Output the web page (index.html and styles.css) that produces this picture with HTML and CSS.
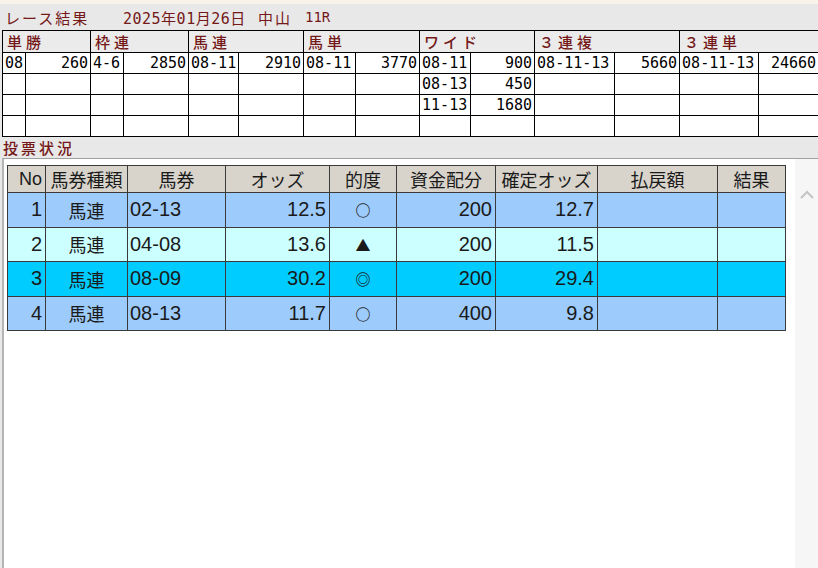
FILE: index.html
```html
<!DOCTYPE html>
<html lang="ja">
<head>
    <meta charset="UTF-8">
    <title>レース結果</title>
    <link rel="stylesheet" href="styles.css">
</head>
<body>
    <div class="top-strip"></div>

    <div class="race-title">
        <span class="race-label">レース結果</span>
        <span class="race-date">2025年01月26日</span>
        <span class="race-place">中山</span>
        <span class="race-no">11R</span>
    </div>

    <table class="payouts">
        <colgroup>
            <col style="width:23px"><col style="width:65px">
            <col style="width:33px"><col style="width:65px">
            <col style="width:50px"><col style="width:65px">
            <col style="width:52px"><col style="width:64px">
            <col style="width:51px"><col style="width:64px">
            <col style="width:80px"><col style="width:65px">
            <col style="width:79px"><col style="width:60px">
        </colgroup>
        <tr class="payout-head">
            <th colspan="2">単勝</th>
            <th colspan="2">枠連</th>
            <th colspan="2">馬連</th>
            <th colspan="2">馬単</th>
            <th colspan="2">ワイド</th>
            <th colspan="2">３連複</th>
            <th colspan="2">３連単</th>
        </tr>
        <tr>
            <td>08</td><td class="num">260</td>
            <td>4-6</td><td class="num">2850</td>
            <td>08-11</td><td class="num">2910</td>
            <td>08-11</td><td class="num">3770</td>
            <td>08-11</td><td class="num">900</td>
            <td>08-11-13</td><td class="num">5660</td>
            <td>08-11-13</td><td class="num">24660</td>
        </tr>
        <tr>
            <td></td><td></td><td></td><td></td><td></td><td></td><td></td><td></td>
            <td>08-13</td><td class="num">450</td>
            <td></td><td></td><td></td><td></td>
        </tr>
        <tr>
            <td></td><td></td><td></td><td></td><td></td><td></td><td></td><td></td>
            <td>11-13</td><td class="num">1680</td>
            <td></td><td></td><td></td><td></td>
        </tr>
        <tr>
            <td></td><td></td><td></td><td></td><td></td><td></td><td></td>
            <td></td><td></td><td></td><td></td><td></td><td></td><td></td>
        </tr>
    </table>

    <div class="section-label">投票状況</div>

    <div class="vote-panel">
        <div class="vote-list">
            <table class="votes">
                <colgroup>
                    <col style="width:38px"><col style="width:82px">
                    <col style="width:98px"><col style="width:104px">
                    <col style="width:67px"><col style="width:99px">
                    <col style="width:102px"><col style="width:120px">
                    <col style="width:68px">
                </colgroup>
                <tr class="vote-head">
                    <th class="no">No</th>
                    <th>馬券種類</th>
                    <th>馬券</th>
                    <th>オッズ</th>
                    <th>的度</th>
                    <th>資金配分</th>
                    <th>確定オッズ</th>
                    <th>払戻額</th>
                    <th>結果</th>
                </tr>
                <tr class="row-blue">
                    <td class="r">1</td><td class="c">馬連</td><td class="l">02-13</td>
                    <td class="r">12.5</td><td class="mark">○</td><td class="r">200</td>
                    <td class="r">12.7</td><td></td><td></td>
                </tr>
                <tr class="row-pale">
                    <td class="r">2</td><td class="c">馬連</td><td class="l">04-08</td>
                    <td class="r">13.6</td><td class="mark">▲</td><td class="r">200</td>
                    <td class="r">11.5</td><td></td><td></td>
                </tr>
                <tr class="row-cyan">
                    <td class="r">3</td><td class="c">馬連</td><td class="l">08-09</td>
                    <td class="r">30.2</td><td class="mark">◎</td><td class="r">200</td>
                    <td class="r">29.4</td><td></td><td></td>
                </tr>
                <tr class="row-blue">
                    <td class="r">4</td><td class="c">馬連</td><td class="l">08-13</td>
                    <td class="r">11.7</td><td class="mark">○</td><td class="r">400</td>
                    <td class="r">9.8</td><td></td><td></td>
                </tr>
            </table>
        </div>
        <div class="scrollbar">
            <svg class="scroll-up" width="16" height="10" viewBox="0 0 16 10">
                <polyline points="2,8 8,2 14,8" fill="none" stroke="#c4c4c4" stroke-width="2"/>
            </svg>
        </div>
    </div>
</body>
</html>
```

FILE: styles.css
```css
body {
    margin: 0;
    width: 818px;
    height: 568px;
    overflow: hidden;
    background: #e8e8e8;
    font-family: "Liberation Sans", "Noto Sans CJK JP", sans-serif;
    color: #000;
}

.top-strip {
    height: 4px;
    background: #f7f3ea;
}

/* race header line */
.race-title {
    height: 26px;
    display: flex;
    align-items: center;
    padding-left: 5px;
    color: #741818;
    font-family: "DejaVu Sans Mono", "Noto Sans CJK JP", monospace;
    font-size: 14px;
    white-space: nowrap;
}

.race-title span {
    flex: none;
}

.race-label {
    font-size: 15px;
    letter-spacing: 2px;
    width: 118px;
}

.race-date {
    font-size: 15px;
    letter-spacing: 0.5px;
    width: 135px;
}

.race-place {
    font-size: 15px;
    letter-spacing: 2px;
    width: 47px;
}

/* payout table */
.payouts {
    margin-left: 2px;
    border-collapse: collapse;
    table-layout: fixed;
    width: 816px;
}

.payouts th,
.payouts td {
    border: 1px solid #000;
    height: 20px;
    padding: 0 2px;
    white-space: nowrap;
    overflow: hidden;
}

.payouts th {
    text-align: left;
    padding-left: 4px;
    color: #741818;
    font-family: "Noto Sans CJK JP", sans-serif;
    font-size: 15px;
    font-weight: 500;
    letter-spacing: 4px;
    background: #ebebeb;
}

.payouts td {
    background: #fff;
    font-family: "DejaVu Sans Mono", monospace;
    font-size: 15px;
    line-height: 20px;
}

.payouts td.num {
    text-align: right;
}

.section-label {
    height: 21px;
    padding-left: 3px;
    display: flex;
    align-items: center;
    color: #741818;
    font-family: "Noto Sans CJK JP", sans-serif;
    font-size: 15px;
    font-weight: 500;
    letter-spacing: 3px;
}

/* vote list panel */
.vote-panel {
    display: flex;
    height: 411px;
    margin-left: 2px;
    border-top: 1px solid #a0a0a0;
    border-left: 2px solid #b4b4b4;
}

.vote-list {
    flex: 1;
    background: #fff;
    padding: 6px 0 0 3px;
}

.scrollbar {
    width: 23px;
    background: #f6f6f6;
    display: flex;
    justify-content: center;
    padding-top: 31px;
    box-sizing: border-box;
}

.votes {
    border-collapse: collapse;
    table-layout: fixed;
    width: 778px;
    font-size: 19px;
    color: #1a1a1a;
}

.votes th,
.votes td {
    border: 1px solid #3a3a3a;
    padding: 0;
    white-space: nowrap;
}

.vote-head th {
    height: 26px;
    background: #d8d4cc;
    font-weight: normal;
    font-size: 18px;
    text-align: center;
}

.vote-head th.no {
    text-align: right;
    padding-right: 3px;
}

.votes td {
    height: 33.5px;
}

.votes td.r {
    text-align: right;
    padding-right: 3px;
    font-size: 20px;
}

.votes td.l {
    text-align: left;
    padding-left: 2px;
    font-size: 20px;
}

.votes td.c {
    text-align: center;
    font-size: 18px;
}

.votes td.mark {
    text-align: center;
    font-family: "Noto Sans CJK JP", sans-serif;
    font-size: 15px;
    font-weight: bold;
}

.row-blue td {
    background: #9dcbfb;
}

.row-pale td {
    background: #ccffff;
}

.row-cyan td {
    background: #00ccff;
}
```
